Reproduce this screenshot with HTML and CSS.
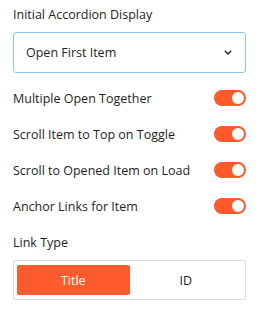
FILE: index.html
```html
<!DOCTYPE html>
<html lang="en">
<head>
    <meta charset="UTF-8">
    <meta name="viewport" content="width=device-width, initial-scale=1.0">
    <title>Accordion Settings</title>
    <link rel="stylesheet" href="styles.css">
</head>
<body>
    <div class="panel">
        <div class="field">
            <label class="field-label">Initial Accordion Display</label>
            <div class="select">
                <span>Open First Item</span>
                <svg class="chevron" width="8" height="5" viewBox="0 0 8 5">
                    <path d="M0.8 0.8 L4 4 L7.2 0.8" fill="none" stroke="#1e1e1e" stroke-width="1.3"/>
                </svg>
            </div>
        </div>

        <div class="toggle-row">
            <span>Multiple Open Together</span>
            <span class="toggle"><span class="knob"></span></span>
        </div>
        <div class="toggle-row">
            <span>Scroll Item to Top on Toggle</span>
            <span class="toggle"><span class="knob"></span></span>
        </div>
        <div class="toggle-row">
            <span>Scroll to Opened Item on Load</span>
            <span class="toggle"><span class="knob"></span></span>
        </div>
        <div class="toggle-row">
            <span>Anchor Links for Item</span>
            <span class="toggle"><span class="knob"></span></span>
        </div>

        <div class="field link-type">
            <label class="field-label">Link Type</label>
            <div class="segmented">
                <button class="seg active">Title</button>
                <button class="seg">ID</button>
            </div>
        </div>
    </div>
</body>
</html>
```

FILE: styles.css
```css
body {
    margin: 0;
    padding: 0;
    background: #fff;
    font-family: 'Open Sans', sans-serif;
    font-size: 12.5px;
    color: #1e1e1e;
}

.panel {
    padding: 6px 15px 0 13px;
}

.field-label {
    display: block;
    line-height: 18px;
    margin-bottom: 8px;
}

/* Select */
.select {
    height: 39px;
    border: 1px solid #8ec5e8;
    border-radius: 3px;
    display: flex;
    align-items: center;
    justify-content: space-between;
    padding: 0 13px 0 12px;
    margin-bottom: 7px;
}

.chevron {
    display: block;
}

/* Toggles */
.toggle-row {
    display: flex;
    justify-content: space-between;
    align-items: center;
    height: 36px;
}

.toggle {
    width: 32px;
    height: 16px;
    border-radius: 8px;
    background: #ff5a2c;
    position: relative;
}

.knob {
    position: absolute;
    top: 2px;
    right: 2px;
    width: 12px;
    height: 12px;
    border-radius: 50%;
    background: #fff;
}

/* Link type */
.link-type {
    margin-top: 10px;
}

.segmented {
    display: flex;
    border: 1px solid #dcdcdc;
    border-radius: 2px;
    padding: 4px 3px;
}

.seg {
    flex: 1;
    height: 30px;
    border: none;
    border-radius: 2px;
    background: #fff;
    font-family: inherit;
    font-size: 12.5px;
    color: #1e1e1e;
}

.seg.active {
    background: #ff5a2c;
    color: #fff;
}
```
